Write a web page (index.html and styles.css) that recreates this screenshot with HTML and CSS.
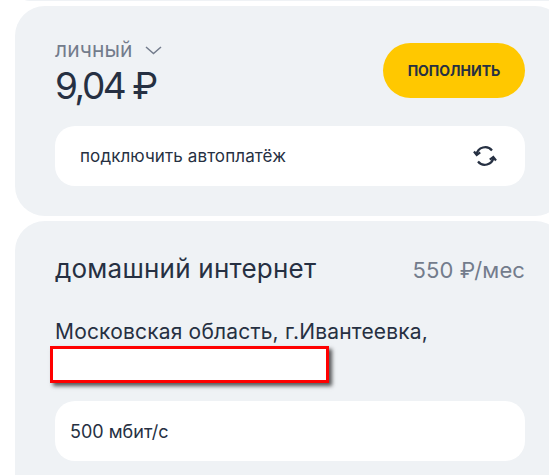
FILE: index.html
```html
<!DOCTYPE html>
<html lang="ru">
<head>
<meta charset="utf-8">
<title>Личный кабинет</title>
<link rel="stylesheet" href="styles.css">
</head>
<body>
<div class="page">
  <div class="card card-prev"></div>
  <section class="card card-balance">
    <div class="balance-row">
      <div class="balance">
        <div class="account">личный
          <svg class="chevron" width="17" height="9" viewBox="0 0 17 9"><path d="M1 1l7.500 6.500L16 1" fill="none" stroke="#737c8c" stroke-width="1.500"/></svg>
        </div>
        <div class="amount">9,04 ₽</div>
      </div>
      <button class="topup">пополнить</button>
    </div>
    <div class="row autopay">
      <span>подключить автоплатёж</span>
      <svg class="sync" width="24" height="24" viewBox="0 0 24 24" fill="none" stroke="#263042" stroke-width="2.200">
        <path d="M3.500 10.500A8.800 8.800 0 0 1 19 6.500"/>
        <path d="M1 7.500l2.700 3.500 3.500-2.700"/>
        <path d="M20.500 13.500A8.800 8.800 0 0 1 5 17.500"/>
        <path d="M23 16.500l-2.700-3.500-3.500 2.700"/>
      </svg>
    </div>
  </section>
  <section class="card card-internet">
    <div class="title-row">
      <h2 class="title">домашний интернет</h2>
      <div class="price">550 ₽/мес</div>
    </div>
    <div class="address">Московская область, г.Ивантеевка,</div>
    <div class="redacted"></div>
    <div class="row speed">500 мбит/с</div>
  </section>
</div>
</body>
</html>
```
FILE: styles.css
```css
html, body { margin: 0; padding: 0; height: 100%; background: #fff; overflow: hidden; }
body { font-family: Inter, "Noto Sans", sans-serif; color: #263042; }
.page { margin-left: 15px; width: 550px; height: 475px; overflow: hidden; display: flex; flex-direction: column; gap: 5px; }
.card { background: #eff2f5; border-radius: 30px; padding: 0 40px; box-sizing: border-box; flex: none; }
.card-prev { height: 30px; margin-top: -29px; }
.card-balance { height: 210px; padding-top: 34px; }
.card-internet { padding-top: 32px; height: 300px; }
.balance-row { display: flex; justify-content: space-between; align-items: flex-start; height: 86px; }
.account { font-size: 21px; line-height: 20px; letter-spacing: 0.1px; color: #737c8c; display: flex; align-items: center; gap: 12px; }
.amount { font-size: 37px; line-height: 40px; letter-spacing: -2.4px; margin-top: 6px; }
.topup { margin-top: 3px; width: 142px; height: 55px; border: 0; border-radius: 28px; background: #ffc800; color: #263042; font: 700 14px Inter, sans-serif; text-transform: uppercase; }
.row { background: #fff; border-radius: 20px; height: 60px; display: flex; align-items: center; box-sizing: border-box; }
.autopay { justify-content: space-between; padding: 0 28px 0 25px; font-size: 17px; letter-spacing: 0.1px; }
.title-row { display: flex; justify-content: space-between; align-items: baseline; }
.title { margin: 0; font-weight: 400; font-size: 26px; line-height: 32px; letter-spacing: 0.22px; }
.price { font-size: 22px; letter-spacing: 0.1px; color: #737c8c; }
.address { margin-top: 33px; font-size: 21px; line-height: 28px; letter-spacing: 0.18px; }
.redacted { margin: 0 0 18px -5px; width: 279px; height: 37px; box-sizing: border-box; border: 3px solid #f00; background: #fff; box-shadow: 3px 3px 4px rgba(0,0,0,.65); }
.speed { padding-left: 15px; font-size: 18px; }
```
